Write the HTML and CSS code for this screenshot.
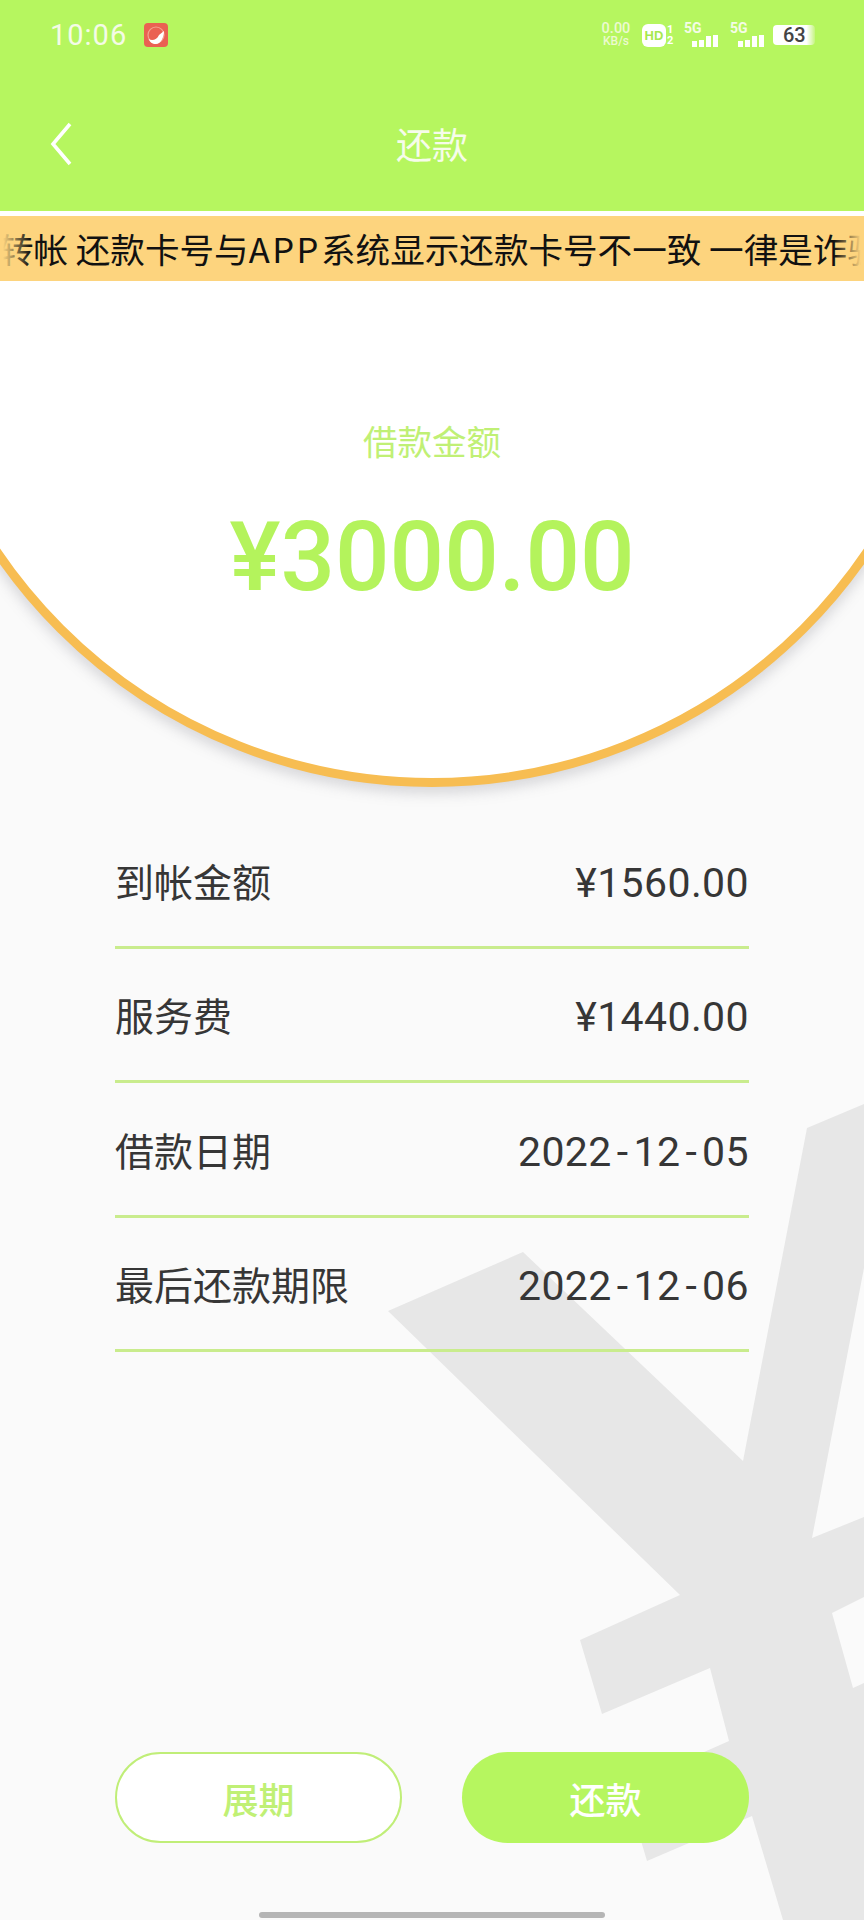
FILE: index.html
```html
<!DOCTYPE html>
<html lang="zh-CN">
<head>
<meta charset="utf-8">
<title>还款</title>
<link rel="stylesheet" href="styles.css">
</head>
<body>
<main class="screen">
  <svg class="watermark" viewBox="0 0 864 1920" aria-hidden="true">
    <polygon points="388,1311 523,1252 743,1461 807,1128 864,1104 864,1268 812,1538 864,1517 864,1597 832,1613 853,1688 864,1683 864,1920 783,1920 752,1816 647,1861 625,1787 729,1741 710,1668 602,1714 580,1640 680,1595"/>
  </svg>
  <div class="dial"></div>

  <header class="header">
    <div class="status">
      <span class="time">10:06</span>
      <svg class="app-icon" viewBox="0 0 24 24" aria-hidden="true">
        <rect width="24" height="24" rx="4" fill="#ea6152"/>
        <circle cx="12" cy="12" r="8" fill="none" stroke="#f4a08f" stroke-width="1.2"/>
        <path d="M4.5 16C8 18 13 17 15 12l5-4c0 6-3 13-8 13-4 0-6-2-7.500-5z" fill="#fff"/>
      </svg>
      <div class="status-right">
        <div class="speed"><span class="speed-num">0.00</span><span class="speed-unit">KB/s</span></div>
        <span class="hd">HD</span>
        <div class="sim"><span>1</span><span>2</span></div>
        <div class="signal first">
          <span class="net">5G</span>
          <div class="bars"><i class="b1"></i><i class="b2"></i><i class="b3"></i><i class="b4"></i></div>
        </div>
        <div class="signal">
          <span class="net">5G</span>
          <div class="bars"><i class="b1"></i><i class="b2"></i><i class="b3"></i><i class="b4"></i></div>
        </div>
        <div class="battery"><span>63</span></div>
      </div>
    </div>
    <nav class="nav">
      <svg class="back" viewBox="0 0 24 44" aria-hidden="true"><path d="M21 2 4 22l17 20"/></svg>
      <h1 class="title">还款</h1>
    </nav>
  </header>

  <div class="notice">
    <p class="notice-text">转帐 还款卡号与<span class="latin">APP</span>系统显示还款卡号不一致 一律是诈骗</p>
    <span class="fade fade-l"></span>
    <span class="fade fade-r"></span>
  </div>

  <section class="amount">
    <div class="amount-label">借款金额</div>
    <div class="amount-value">¥3000.00</div>
  </section>

  <section class="rows">
    <div class="row"><span>到帐金额</span><span class="val">¥1560.00</span></div>
    <div class="row"><span>服务费</span><span class="val">¥1440.00</span></div>
    <div class="row"><span>借款日期</span><span class="val">2022<span class="dash">-</span>12<span class="dash">-</span>05</span></div>
    <div class="row"><span>最后还款期限</span><span class="val">2022<span class="dash">-</span>12<span class="dash">-</span>06</span></div>
  </section>

  <div class="actions">
    <button class="btn btn-ghost">展期</button>
    <button class="btn btn-solid">还款</button>
  </div>
  <div class="home-bar"></div>
</main>
</body>
</html>
```
FILE: styles.css
```css
* { box-sizing: border-box; margin: 0; padding: 0; }
html, body { width: 864px; height: 1920px; overflow: hidden; }
body { background: #fafafa; font-family: "Noto Sans CJK SC", "Liberation Sans", sans-serif; }

.screen { position: relative; width: 864px; height: 1920px; overflow: hidden; background: #fafafa; display: flex; flex-direction: column; }

.watermark { position: absolute; inset: 0; width: 864px; height: 1920px; }
.watermark polygon { fill: #e7e7e7; }

.dial { position: absolute; left: -98px; top: -273px; width: 1060px; height: 1060px; border-radius: 50%; background: #fff; border: 9px solid #f7bd52; box-shadow: 0 6px 14px rgba(120, 120, 130, .28); }

.header { position: relative; height: 211px; background: #b6f65f; color: #fff; display: flex; flex-direction: column; }

.status { height: 70px; padding: 0 49px 0 50px; display: flex; align-items: center; }
.time { font-family: Roboto, sans-serif; font-size: 29px; letter-spacing: 1px; color: #f4fbe6; width: 94px; }
.app-icon { width: 24px; height: 24px; display: block; }
.status-right { margin-left: auto; display: flex; align-items: center; }

.speed { width: 32px; display: flex; flex-direction: column; align-items: center; font-family: Roboto, sans-serif; font-weight: 500; color: #ecfad0; line-height: 12px; }
.speed-num { font-size: 14.5px; }
.speed-unit { font-size: 12px; }

.hd { margin-left: 10px; width: 24px; height: 23px; border-radius: 6px; background: #fff; color: #a6e84e; font: 700 13px/23px "Liberation Sans", sans-serif; text-align: center; }
.sim { margin-left: 1px; width: 7px; display: flex; flex-direction: column; font: 700 11px/11px Roboto, sans-serif; color: #fff; }

.signal { margin-left: 12px; width: 34px; height: 24px; position: relative; }
.signal.first { margin-left: 10px; }
.net { position: absolute; left: 0; top: -1px; font: 700 14px/12px Roboto, sans-serif; color: #f4fce6; }
.bars { position: absolute; right: 0; bottom: 0; display: flex; align-items: flex-end; gap: 2px; }
.bars i { display: block; width: 5px; background: #fff; }
.bars .b1 { height: 6px; }
.bars .b2 { height: 7px; }
.bars .b3 { height: 11px; }
.bars .b4 { height: 12px; }

.battery { margin-left: 9px; width: 42px; height: 20px; border-radius: 4px; background: linear-gradient(90deg, #fff 0 80%, #dff8b8 92%, #c4f57e 100%); color: #444; font: 500 20px/20px Roboto, sans-serif; display: flex; padding-left: 10px; }

.nav { position: relative; height: 141px; display: flex; align-items: center; justify-content: center; }
.nav .title { font-size: 36px; font-weight: 400; line-height: 1; color: #f6fcea; transform: translateY(2px); }
.back { position: absolute; left: 49px; top: 52px; width: 24px; height: 44px; }
.back path { fill: none; stroke: #fff; stroke-width: 3.6; }

.notice { position: relative; margin-top: 5px; height: 65px; background: #fdd47e; overflow: hidden; display: flex; align-items: center; justify-content: flex-end; }
.notice-text { white-space: nowrap; font-size: 34.6px; line-height: 1; color: #111; margin-right: -18px; }
.latin { letter-spacing: 2.500px; }
.fade { position: absolute; top: 0; bottom: 0; width: 30px; }
.fade-l { left: 0; background: linear-gradient(90deg, #fdd47e 10%, rgba(253, 212, 126, 0)); }
.fade-r { right: 0; background: linear-gradient(270deg, #fdd47e 10%, rgba(253, 212, 126, 0)); }

.amount { position: relative; height: 502px; display: flex; flex-direction: column; align-items: center; padding-top: 133px; }
.amount-label { font-size: 34.5px; line-height: 52px; color: #c0f075; }
.amount-value { margin-top: 35px; font-family: Roboto, sans-serif; font-weight: 500; font-size: 96px; line-height: 112px; color: #b4f35c; }

.rows { position: relative; margin: 31px 115px 0; display: flex; flex-direction: column; }
.row { height: 134.5px; border-bottom: 3px solid #c9ec8d; display: flex; justify-content: space-between; align-items: center; font-size: 39px; color: #363636; }
.val { font-family: Roboto, sans-serif; font-size: 41px; letter-spacing: .4px; padding-top: 6px; }
.dash { margin: 0 5px; }

.actions { position: absolute; left: 115px; right: 115px; top: 1752px; display: flex; justify-content: space-between; }
.btn { width: 287px; height: 91px; border-radius: 46px; font-family: inherit; font-size: 36px; font-weight: 500; }
.btn-ghost { background: #fff; border: 2px solid #c0ee78; color: #c0f075; }
.btn-solid { background: #b6f65f; border: 0; color: #fff; }

.home-bar { position: absolute; left: 259px; top: 1912px; width: 346px; height: 6px; border-radius: 3px; background: #b5b5b5; }
```
